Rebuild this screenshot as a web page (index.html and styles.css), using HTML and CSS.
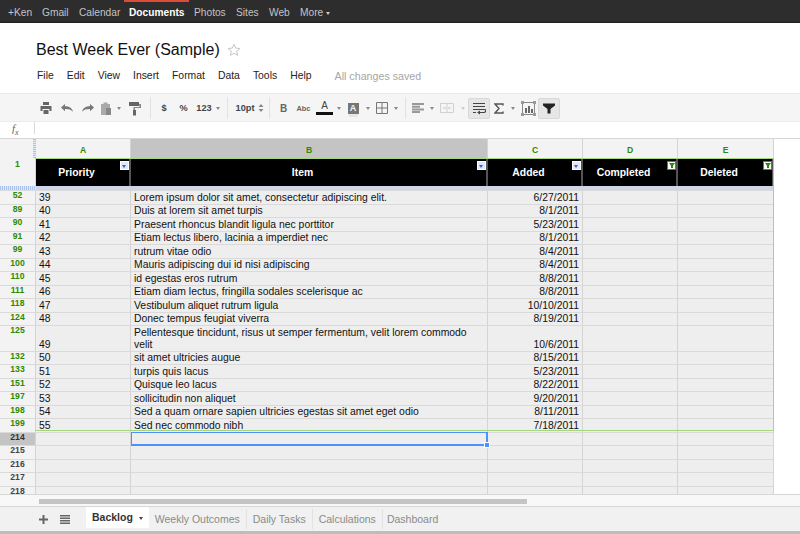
FILE: index.html
```html
<!DOCTYPE html>
<html lang="en">
<head>
  <meta charset="UTF-8">
  <title>Best Week Ever (Sample)</title>
  <link rel="stylesheet" href="styles.css">
</head>
<body>

<nav class="topbar">
  <a class="w-ken">+Ken</a>
  <a class="w-gmail">Gmail</a>
  <a class="w-calendar">Calendar</a>
  <a class="w-docs active">Documents</a>
  <a class="w-photos">Photos</a>
  <a class="w-sites">Sites</a>
  <a class="w-web">Web</a>
  <a class="w-more">More <i class="caret caret-light"></i></a>
</nav>

<header class="doc-head">
  <div class="title-row">
    <h1>Best Week Ever (Sample)</h1>
    <svg class="star" width="14" height="14" viewBox="0 0 14 14"><path d="M7 1.2l1.7 3.9 4.2.4-3.2 2.8.9 4.1L7 10.3l-3.6 2.1.9-4.1L1.1 5.5l4.2-.4z" fill="none" stroke="#c6c6c6"/></svg>
  </div>
  <div class="menu">
    <span>File</span><span>Edit</span><span>View</span><span>Insert</span><span>Format</span><span>Data</span><span>Tools</span><span>Help</span>
    <span class="saved">All changes saved</span>
  </div>
</header>

<div class="toolbar">
  <span class="tb w21"><svg width="14" height="14" viewBox="0 0 14 14"><path d="M4 1h6v3H4zM1.500 5h11v5H10.500V8h-7v2H1.500zM4.500 9h5v4h-5z" fill="#666"/></svg></span>
  <span class="tb w21"><svg width="14" height="12" viewBox="0 0 14 12"><path d="M1 5.500L5 2v2.300c4 0 7 1.500 8 5.500-2-2.300-4.500-2.800-8-2.700V9.200z" fill="#777"/></svg></span>
  <span class="tb w21"><svg width="14" height="12" viewBox="0 0 14 12"><path d="M13 5.500L9 2v2.300C5 4.300 2 5.800 1 9.800c2-2.300 4.500-2.800 8-2.700v2.100z" fill="#777"/></svg></span>
  <span class="tb w15"><svg width="12" height="15" viewBox="0 0 12 15"><path d="M1 3h2.500V1.500h4V3H10v4H6v7H1z" fill="#aaa"/><path d="M6 7h5v7H6z" fill="#888"/></svg></span>
  <span class="tb w12"><i class="caret"></i></span>
  <span class="tb w20"><svg width="14" height="15" viewBox="0 0 14 15"><path d="M1 1h10v4H1z" fill="#666"/><path d="M11 3h2v4H7v2H5.500V6H11.500z" fill="#888"/><path d="M5 9h3v5.500H5z" fill="#666"/></svg></span>
  <span class="tb w10"><i class="sep"></i></span>
  <span class="tb w18 tb-text">$</span>
  <span class="tb w21 tb-text">%</span>
  <span class="tb w20 tb-text">123</span>
  <span class="tb w8"><i class="caret"></i></span>
  <span class="tb w10"><i class="sep"></i></span>
  <span class="tb w26 tb-text">10pt</span>
  <span class="tb w6"><svg width="6" height="10" viewBox="0 0 6 10"><path d="M3 1L5.500 4H.5zM3 9L.5 6h5z" fill="#888"/></svg></span>
  <span class="tb w10"><i class="sep"></i></span>
  <span class="tb w19 tb-bold">B</span>
  <span class="tb w21 tb-abc">Abc</span>
  <span class="tb w21"><span class="color-a">A</span></span>
  <span class="tb w8"><i class="caret"></i></span>
  <span class="tb w20"><span class="fill-a">A</span></span>
  <span class="tb w10"><i class="caret"></i></span>
  <span class="tb w18"><svg width="12" height="12" viewBox="0 0 12 12"><path d="M.5.500h11v11H.5zM6 .5v11M.5 6h11" fill="none" stroke="#777"/></svg></span>
  <span class="tb w10"><i class="caret"></i></span>
  <span class="tb w8"><i class="sep"></i></span>
  <span class="tb w18"><svg width="12" height="10" viewBox="0 0 12 10"><path d="M0 0h12v2H0zM0 2.700h8v2H0zM0 5.400h12v2H0zM0 8h8v2H0z" fill="#999"/></svg></span>
  <span class="tb w10"><i class="caret"></i></span>
  <span class="tb w20"><svg width="14" height="10" viewBox="0 0 14 10"><path d="M.5.500h13v9H.5zM7 .5v9" fill="none" stroke="#d0d0d0"/><path d="M3 5h3M8 5h3" stroke="#c4c4c4"/></svg></span>
  <span class="tb w11"><i class="caret caret-pale"></i></span>
  <span class="tb tb-on w22"><svg width="14" height="13" viewBox="0 0 14 13"><path d="M1 1.500h12M1 4.500h12M1 7.500h12c1 0 .8 3-1 3H7" fill="none" stroke="#444" stroke-width="1.200"/><path d="M8 8.500v4L5 10.500z" fill="#444"/><path d="M1 10.500h3" stroke="#444"/></svg></span>
  <span class="tb w18"><svg width="10" height="11" viewBox="0 0 10 11"><path d="M9 2.500V1H1l4 4.500L1 10h8V8.500" fill="none" stroke="#555" stroke-width="1.400"/></svg></span>
  <span class="tb w10"><i class="caret"></i></span>
  <span class="tb w20"><svg width="15" height="15" viewBox="0 0 15 15"><path d="M1.500 1.500h12v12h-12z" fill="none" stroke="#888"/><path d="M4 7h2v5H4zM7 5h2v7H7zM10 8h2v4h-2z" fill="#666"/><path d="M0 0h3v3H0zM12 0h3v3h-3zM0 12h3v3H0zM12 12h3v3h-3z" fill="#999"/></svg></span>
  <span class="tb tb-on tb-filter w22"><svg width="12" height="11" viewBox="0 0 12 11"><path d="M0 .5h12v2L7.500 6v4.500h-3V6L0 2.500z" fill="#222"/></svg></span>
</div>

<div class="formula">
  <span class="fx">f<sub>x</sub></span>
</div>

<main class="sheet">
  <div class="row col-heads">
    <div class="rh rh-freeze"></div>
    <div>A</div>
    <div class="col-sel">B</div>
    <div>C</div>
    <div>D</div>
    <div>E</div>
  </div>

  <div class="row head-row">
    <div class="rh">1</div>
    <div>Priority<i class="flt"></i></div>
    <div>Item<i class="flt"></i></div>
    <div>Added<i class="flt"></i></div>
    <div>Completed<i class="flt flt-on"></i></div>
    <div>Deleted<i class="flt flt-on"></i></div>
  </div>

  <div class="row freeze-row">
    <div class="rh"></div><div></div><div></div><div></div><div></div><div></div>
  </div>

  <div class="row"><div class="rh">52</div><div>39</div><div>Lorem ipsum dolor sit amet, consectetur adipiscing elit.</div><div class="num">6/27/2011</div><div></div><div></div></div>
  <div class="row"><div class="rh">89</div><div>40</div><div>Duis at lorem sit amet turpis</div><div class="num">8/1/2011</div><div></div><div></div></div>
  <div class="row"><div class="rh">90</div><div>41</div><div>Praesent rhoncus blandit ligula nec porttitor</div><div class="num">5/23/2011</div><div></div><div></div></div>
  <div class="row"><div class="rh">91</div><div>42</div><div>Etiam lectus libero, lacinia a imperdiet nec</div><div class="num">8/1/2011</div><div></div><div></div></div>
  <div class="row"><div class="rh">99</div><div>43</div><div>rutrum vitae odio</div><div class="num">8/4/2011</div><div></div><div></div></div>
  <div class="row"><div class="rh">100</div><div>44</div><div>Mauris adipiscing dui id nisi adipiscing</div><div class="num">8/4/2011</div><div></div><div></div></div>
  <div class="row"><div class="rh">110</div><div>45</div><div>id egestas eros rutrum</div><div class="num">8/8/2011</div><div></div><div></div></div>
  <div class="row"><div class="rh">111</div><div>46</div><div>Etiam diam lectus, fringilla sodales scelerisque ac</div><div class="num">8/8/2011</div><div></div><div></div></div>
  <div class="row"><div class="rh">118</div><div>47</div><div>Vestibulum aliquet rutrum ligula</div><div class="num">10/10/2011</div><div></div><div></div></div>
  <div class="row"><div class="rh">124</div><div>48</div><div>Donec tempus feugiat viverra</div><div class="num">8/19/2011</div><div></div><div></div></div>
  <div class="row row-tall"><div class="rh">125</div><div>49</div><div>Pellentesque tincidunt, risus ut semper fermentum, velit lorem commodo velit</div><div class="num">10/6/2011</div><div></div><div></div></div>
  <div class="row"><div class="rh">132</div><div>50</div><div>sit amet ultricies augue</div><div class="num">8/15/2011</div><div></div><div></div></div>
  <div class="row"><div class="rh">133</div><div>51</div><div>turpis quis lacus</div><div class="num">5/23/2011</div><div></div><div></div></div>
  <div class="row"><div class="rh">151</div><div>52</div><div>Quisque leo lacus</div><div class="num">8/22/2011</div><div></div><div></div></div>
  <div class="row"><div class="rh">197</div><div>53</div><div>sollicitudin non aliquet</div><div class="num">9/20/2011</div><div></div><div></div></div>
  <div class="row"><div class="rh">198</div><div>54</div><div>Sed a quam ornare sapien ultricies egestas sit amet eget odio</div><div class="num">8/11/2011</div><div></div><div></div></div>
  <div class="row"><div class="rh">199</div><div>55</div><div>Sed nec commodo nibh</div><div class="num">7/18/2011</div><div></div><div></div></div>

  <div class="row plain"><div class="rh rh-sel">214</div><div></div><div></div><div></div><div></div><div></div></div>
  <div class="row plain"><div class="rh">215</div><div></div><div></div><div></div><div></div><div></div></div>
  <div class="row plain"><div class="rh">216</div><div></div><div></div><div></div><div></div><div></div></div>
  <div class="row plain"><div class="rh">217</div><div></div><div></div><div></div><div></div><div></div></div>
  <div class="row plain"><div class="rh">218</div><div></div><div></div><div></div><div></div><div></div></div>

  <div class="filter-range"></div>
  <div class="selection"><i class="handle"></i></div>
</main>

<div class="hscroll"><div class="hscroll-thumb"></div></div>

<footer class="tabs">
  <svg class="tab-icon tab-add" width="9" height="9" viewBox="0 0 9 9"><path d="M3.500 0h2v3.500H9v2H5.500V9h-2V5.500H0v-2h3.500z" fill="#666"/></svg>
  <svg class="tab-icon tab-list" width="10" height="9" viewBox="0 0 10 9"><path d="M0 0h10v1.400H0zM0 2.500h10v1.400H0zM0 5h10v1.400H0zM0 7.500h10v1.400H0z" fill="#666"/></svg>
  <span class="tab tab-active">Backlog <i class="caret caret-dark"></i></span>
  <span class="tab">Weekly Outcomes</span>
  <span class="tab">Daily Tasks</span>
  <span class="tab">Calculations</span>
  <span class="tab tab-last">Dashboard</span>
</footer>
<div class="bottom-line"></div>

</body>
</html>
```

FILE: styles.css
```css
body {
  margin: 0;
  height: 534px;
  overflow: hidden;
  background: #fff;
  color: #222;
  font-family: "Liberation Sans", Arial, sans-serif;
  font-size: 10.4px;
}

/* google bar */
.topbar {
  display: flex;
  height: 23px;
  background: #2d2d2d;
  border-bottom: 1px solid #1f1f1f;
  box-sizing: border-box;
  padding: 3px 0 0 8px;
  align-items: center;
  font-size: 10.2px;
  color: #c4c4c4;
}

.topbar a {
  display: block;
  white-space: nowrap;
}

.topbar .w-ken { width: 34px; }
.topbar .w-gmail { width: 37px; }
.topbar .w-calendar { width: 50px; }
.topbar .w-docs { width: 65px; }
.topbar .w-photos { width: 42px; }
.topbar .w-sites { width: 33px; }
.topbar .w-web { width: 31px; }

.topbar .active {
  position: relative;
  font-weight: bold;
  color: #fff;
}

.topbar .active::before {
  content: "";
  position: absolute;
  left: -5px;
  top: -7px;
  width: 65px;
  height: 2px;
  background: #dd4b39;
}

.caret {
  display: inline-block;
  width: 0;
  height: 0;
  border-left: 2.5px solid transparent;
  border-right: 2.5px solid transparent;
  border-top: 3px solid #888;
  vertical-align: middle;
}

.caret-light { border-top-color: #ccc; }
.caret-pale { border-top-color: #ccc; }
.caret-dark { border-top-color: #444; margin-left: 3px; }

/* title and menus */
.doc-head {
  height: 70px;
  box-sizing: border-box;
  padding: 17px 0 0 36px;
}

.title-row {
  display: flex;
  align-items: center;
  height: 20px;
}

h1 {
  margin: 0;
  font-size: 16px;
  font-weight: normal;
  color: #111;
}

.star { margin-left: 7px; }

.menu {
  display: flex;
  margin-top: 10px;
  padding-left: 1px;
  font-size: 10.4px;
  color: #222;
}

.menu span { margin-right: 13px; }

.menu .saved {
  margin-left: 10px;
  font-size: 10.7px;
  color: #a6a6a6;
}

/* toolbar */
.toolbar {
  display: flex;
  align-items: center;
  height: 29px;
  box-sizing: border-box;
  padding: 1px 0 0 35px;
  background: #f5f5f5;
  border-top: 1px solid #ebebeb;
  border-bottom: 1px solid #ebebeb;
}

.tb {
  display: flex;
  flex: none;
  align-items: center;
  justify-content: center;
  height: 21px;
  box-sizing: border-box;
}

.w6 { width: 6px; }
.w8 { width: 8px; }
.w10 { width: 10px; }
.w11 { width: 11px; }
.w12 { width: 12px; }
.w15 { width: 15px; }
.w18 { width: 18px; }
.w19 { width: 19px; }
.w20 { width: 20px; }
.w21 { width: 21px; }
.w22 { width: 22px; }
.w26 { width: 26px; }

.tb-text {
  font-size: 9.2px;
  font-weight: bold;
  color: #444;
}

.tb-bold {
  font-size: 10px;
  font-weight: bold;
  color: #666;
}

.tb-abc {
  font-size: 7.4px;
  color: #666;
  font-weight: bold;
}

.sep {
  width: 1px;
  height: 22px;
  background: #e2e2e2;
}

.color-a {
  width: 17px;
  height: 14px;
  box-sizing: border-box;
  border-bottom: 3px solid #111;
  font-size: 10px;
  line-height: 10px;
  text-align: center;
  color: #444;
}

.fill-a {
  width: 11px;
  height: 11px;
  background: #777;
  color: #f5f5f5;
  font-size: 9px;
  font-weight: bold;
  line-height: 11px;
  text-align: center;
  box-shadow: 0 4px 0 -1px #e6e6e6;
}

.tb-on {
  background: #e6e6e6;
  border: 1px solid #d8d8d8;
  border-radius: 2px;
}

/* formula bar */
.formula {
  height: 17px;
  box-sizing: border-box;
  border-bottom: 1px solid #d6d6d6;
  position: relative;
}

.fx {
  display: block;
  width: 35px;
  height: 12px;
  box-sizing: border-box;
  padding-left: 12px;
  border-right: 1px solid #d9d9d9;
  font-family: "Liberation Serif", serif;
  font-style: italic;
  font-size: 11px;
  line-height: 12px;
  color: #666;
}

.fx sub {
  font-size: 8px;
  line-height: 0;
}

/* grid */
.sheet {
  position: relative;
  height: 356px;
  overflow: hidden;
  border-bottom: 1px solid #d6d6d6;
  box-sizing: border-box;
}

.row {
  display: grid;
  grid-template-columns: 36px 95px 357px 95px 95px 96px;
  height: 13.5px;
  line-height: 12px;
}

.row > div {
  min-width: 0;
  box-sizing: border-box;
  padding: 0 3px;
  display: flex;
  align-items: flex-end;
  background: #eee;
  border-right: 1px solid #d4d4d4;
  border-top: 1px solid #dadada;
  color: #111;
}

.row > .rh {
  justify-content: center;
  align-items: flex-start;
  background: #f3f3f3;
  color: #2a8a00;
  font-size: 8.6px;
  font-weight: bold;
  line-height: 9px;
  padding: 0;
}

.row > .num { justify-content: flex-end; }

.row-tall { height: 25.5px; }

.plain > .rh { color: #444; line-height: 8px; }
.plain > .rh-sel { background: #c4c4c4; color: #333; }

.col-heads { height: 19px; }

.col-heads > div {
  justify-content: center;
  align-items: center;
  padding: 2px 0 0;
  background: #f3f3f3;
  color: #2a8a00;
  font-size: 8.6px;
  font-weight: bold;
  border-top: 0;
}

.col-heads > .col-sel {
  background: #c4c4c4;
  color: #2a8a00;
}

.col-heads > .rh-freeze {
  background: repeating-linear-gradient(0deg, #a9c4f5 0 1px, #dfe8fa 1px 2px) right / 3px 100% no-repeat #f3f3f3;
  border-right: 0;
}

.head-row { height: 28px; }

.head-row > div {
  position: relative;
  justify-content: center;
  align-items: center;
  background: #000;
  border-right: 2px solid #555;
  border-top: 0;
  padding: 2px 12px 0 0;
  color: #fff;
  font-weight: bold;
  font-size: 10.4px;
}

.head-row > .rh {
  align-items: flex-start;
  background: #f3f3f3;
  border-right: 1px solid #d4d4d4;
  padding: 2px 0 0;
  font-size: 8.6px;
  line-height: 9px;
}

.freeze-row { height: 4px; }

.freeze-row > div {
  background: #cdd5e6;
  border: 0;
}

.freeze-row > .rh {
  background: repeating-linear-gradient(90deg, #a9c4f5 0 1px, #dfe8fa 1px 2px);
}

/* filter buttons */
.flt {
  position: absolute;
  top: 3px;
  right: 0;
  width: 9px;
  height: 9px;
  background: #dfe7fb;
  border: 1px solid #fff;
  box-sizing: border-box;
}

.flt::after {
  content: "";
  position: absolute;
  left: 1px;
  top: 2.500px;
  border-left: 2.500px solid transparent;
  border-right: 2.500px solid transparent;
  border-top: 3px solid #3c62c8;
}

.flt-on {
  background: #fff;
  border-color: #3d9a10;
}

.flt-on::after {
  left: .5px;
  top: 1px;
  border-left-width: 3px;
  border-right-width: 3px;
  border-top: 4px solid #2a8a00;
}

.flt-on::before {
  content: "";
  position: absolute;
  left: 2.500px;
  top: 3px;
  width: 2px;
  height: 3px;
  background: #2a8a00;
}

/* overlays over the grid */
.filter-range {
  position: absolute;
  left: 35px;
  top: 19px;
  width: 739px;
  height: 273px;
  box-sizing: border-box;
  border: 1px solid #a4d67c;
  border-left: 0;
}

.selection {
  position: absolute;
  left: 131px;
  top: 293px;
  width: 357px;
  height: 14px;
  box-sizing: border-box;
  border: 1px solid #4d90fe;
  border-width: 1px 2px 2px 1px;
}

.handle {
  position: absolute;
  right: -4px;
  bottom: -4px;
  width: 4px;
  height: 4px;
  background: #4d90fe;
  border: 1px solid #fff;
}

/* horizontal scroll */
.hscroll {
  height: 12px;
  box-sizing: border-box;
  padding: 4px 273px 3px 39px;
  background: #f8f8f8;
  border-bottom: 1px solid #d6d6d6;
}

.hscroll-thumb {
  height: 5px;
  background: #c4c4c4;
}

/* sheet tabs */
.tabs {
  display: flex;
  align-items: center;
  height: 24px;
  box-sizing: border-box;
  background: #f1f1f1;
  color: #8a8a8a;
  font-size: 10.5px;
}

.tab-add { margin-left: 39px; }
.tab-list { margin-left: 12px; margin-right: 16px; }

.tab {
  height: 20px;
  line-height: 20px;
  padding: 0 6px;
  border-right: 1px solid #e2e2e2;
  white-space: nowrap;
  font-weight: normal;
}

.tab-last { border-right: 0; margin-left: -2px; }

.tab-active {
  margin-top: -3px;
  height: 21px;
  line-height: 21px;
  padding: 0 6px;
  background: #fff;
  border-right: 0;
  font-weight: bold;
  color: #333;
}

.bottom-line {
  height: 3px;
  background: #bdbdbd;
}
```
